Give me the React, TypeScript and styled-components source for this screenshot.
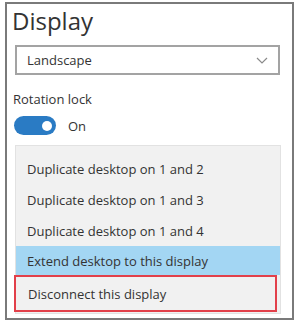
import React from 'react';
import styled, { createGlobalStyle } from 'styled-components';

const GlobalStyle = createGlobalStyle`
    body {
        margin: 0;
        background: #ffffff;
        font-family: 'Open Sans', 'Liberation Sans', sans-serif;
        color: #2b2b2b;
    }
`;

const options = [
    'Duplicate desktop on 1 and 2',
    'Duplicate desktop on 1 and 3',
    'Duplicate desktop on 1 and 4',
    'Extend desktop to this display',
    'Disconnect this display',
];

export default function App() {
    return (
        <>
            <GlobalStyle />
            <Frame>
                <Title>Display</Title>
                <Select>
                    <span>Landscape</span>
                    <svg width="12" height="7" viewBox="0 0 12 7">
                        <path d="M1 1 L6 6 L11 1" fill="none" stroke="#8a8a8a" strokeWidth="1.2" />
                    </svg>
                </Select>
                <Label>Rotation lock</Label>
                <ToggleRow>
                    <Toggle>
                        <Thumb />
                    </Toggle>
                    <span>On</span>
                </ToggleRow>
                <Menu>
                    {options.map((text, i) => (
                        <Item
                            key={text}
                            $selected={i === 3}
                            $outlined={i === 4}
                        >
                            {text}
                        </Item>
                    ))}
                </Menu>
            </Frame>
        </>
    );
}

const Frame = styled.div`
    box-sizing: border-box;
    margin: 2px 0 0 5px;
    width: 289px;
    height: 318px;
    border: 2px solid #7a7a7a;
    box-shadow: 0 1px 0 #cfcfcf;
    padding: 0 10px 0 6px;
    display: flex;
    flex-direction: column;
`;

const Title = styled.div`
    font-size: 24px;
    line-height: 32px;
    margin: 1px 0 0 -1px;
    color: #333;
`;

const Select = styled.div`
    box-sizing: border-box;
    margin: 8px 0 0 2px;
    width: 265px;
    height: 30px;
    border: 2px solid #a3a3a3;
    display: flex;
    align-items: center;
    justify-content: space-between;
    padding: 0 10px 0 10px;
    font-size: 13px;
    color: #333;
`;

const Label = styled.div`
    margin-top: 15px;
    font-size: 13px;
    line-height: 18px;
    color: #333;
`;

const ToggleRow = styled.div`
    display: flex;
    align-items: center;
    gap: 12px;
    margin-top: 8px;
    margin-left: 1px;
    font-size: 13px;
    color: #333;
`;

const Toggle = styled.div`
    box-sizing: border-box;
    width: 42px;
    height: 19px;
    border-radius: 10px;
    background: #2a7bc4;
    display: flex;
    align-items: center;
    justify-content: flex-end;
    padding-right: 4px;
`;

const Thumb = styled.div`
    width: 10px;
    height: 10px;
    border-radius: 50%;
    background: #ffffff;
`;

const Menu = styled.div`
    box-sizing: border-box;
    margin: 10px 0 0 2px;
    width: 266px;
    background: #f1f1f1;
    border: 1px solid #e2e2e2;
    padding: 7px 0 1px;
    display: flex;
    flex-direction: column;
`;

const Item = styled.div<{ $selected?: boolean; $outlined?: boolean }>`
    box-sizing: border-box;
    height: ${(p) => (p.$outlined ? 37 : p.$selected ? 29 : 31)}px;
    display: flex;
    align-items: center;
    padding-left: ${(p) => (p.$outlined ? 12 : 11)}px;
    font-size: 13px;
    color: #333;
    background: ${(p) => (p.$selected ? '#a3d6f3' : 'transparent')};
    border: ${(p) => (p.$outlined ? '2px solid #e2404a' : 'none')};
    margin: ${(p) => (p.$outlined ? '0 3px 0 -2px' : '0')};
`;
